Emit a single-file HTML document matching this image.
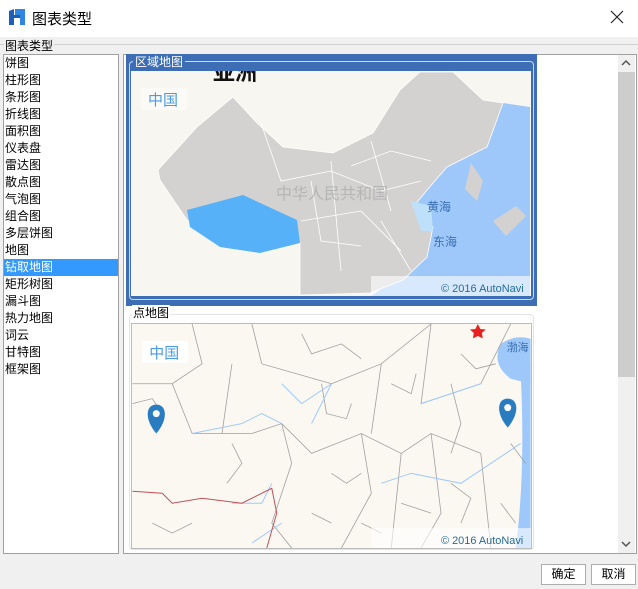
<!DOCTYPE html>
<html><head><meta charset="utf-8"><style>
*{margin:0;padding:0;box-sizing:border-box}
body{width:638px;height:589px;background:#f0f0f0;font-family:"Liberation Sans","Noto Sans CJK SC",sans-serif;position:relative;overflow:hidden;font-size:12px;color:#000}
.title{position:absolute;left:0;top:0;width:638px;height:37px;background:#fff}
.abs{position:absolute}
.list{position:absolute;left:3px;top:54px;width:116px;height:500px;background:#fff;border:1px solid #a0a0a0}
.list div{height:17px;line-height:17px;padding-left:1px;font-size:12px}
.list .sel{background:#3399ff;color:#fff}
.right{position:absolute;left:123px;top:54px;width:514px;height:500px;background:#fff;border:1px solid #a0a0a0}
.btn{position:absolute;top:564px;height:21px;background:#fff;border:1px solid #adadad;text-align:center;line-height:19px;font-size:12px}
</style></head><body>
<div class="title"></div>
<svg class="abs" style="left:8px;top:8px" width="18" height="18" viewBox="0 0 18 18"><path d="M1 3 L6 1 L6 17 L1 17Z" fill="#1d5fb8"/><path d="M7 1 L17 1 L17 17 L12 17 L12 10 L7 10Z" fill="#2e86e0"/><path d="M6 7 L12 7 L12 10 L6 10Z" fill="#1d5fb8"/></svg>
<div class="abs" style="left:32px;top:8px;font-size:15px">图表类型</div>
<svg class="abs" style="left:610px;top:10px" width="14" height="14"><path d="M1 1L13 13M13 1L1 13" stroke="#222" stroke-width="1.2"/></svg>
<div class="abs" style="left:0;top:44px;width:638px;border-top:1px solid #d0d0d0"></div>
<div class="abs" style="left:4px;top:37px;background:#f0f0f0;padding:0 1px;font-size:12px">图表类型</div>
<div class="list">
<div>饼图</div><div>柱形图</div><div>条形图</div><div>折线图</div><div>面积图</div><div>仪表盘</div><div>雷达图</div><div>散点图</div><div>气泡图</div><div>组合图</div><div>多层饼图</div><div>地图</div><div class="sel">钻取地图</div><div>矩形树图</div><div>漏斗图</div><div>热力地图</div><div>词云</div><div>甘特图</div><div>框架图</div>
</div>
<div class="right"></div>
<div class="abs" style="left:618px;top:55px;width:17px;height:498px;background:#f0f0f0"></div>
<div class="abs" style="left:618px;top:72px;width:17px;height:305px;background:#cdcdcd"></div>
<svg class="abs" style="left:620px;top:58px" width="12" height="10"><path d="M2 7L6 3L10 7" stroke="#555" fill="none" stroke-width="1.5"/></svg>
<svg class="abs" style="left:620px;top:539px" width="12" height="10"><path d="M2 3L6 7L10 3" stroke="#555" fill="none" stroke-width="1.5"/></svg>
<!-- selected panel -->
<div class="abs" style="left:126px;top:54px;width:411px;height:252px;background:#3d6db5"></div>
<div class="abs" style="left:129px;top:61px;width:405px;height:239px;border:1px solid #c8d8f0;border-radius:4px"></div>
<div class="abs" style="left:133px;top:54px;background:#3d6db5;color:#fff;padding:0 2px;font-size:12px;line-height:16px">区域地图</div>
<svg class="abs" style="left:131px;top:71px" width="400" height="225" viewBox="0 0 400 225">
<rect width="400" height="225" fill="#f8f6f1"/>
<polygon points="399,36 399,225 240,225 296,186 302,156 282,136 302,112 316,96 356,76 372,32" fill="#9fc8fa"/>
<polygon points="27,99 66,56 102,26 126,52 152,76 202,82 242,62 269,19 289,1 322,1 352,29 372,32 356,76 316,96 302,112 282,136 302,156 296,186 272,209 239,222 169,224 169,172 129,179 56,149 29,109" fill="#d4d2d1" stroke="#fff" stroke-width="0.8"/>
<polygon points="340,92 352,110 346,130 334,118" fill="#d4d2d1"/>
<polygon points="362,150 385,135 395,145 375,165" fill="#d4d2d1"/>
<polygon points="56,139 112,124 166,149 169,172 129,182 89,176 59,156" fill="#56b1f9"/>
<polygon points="280,130 300,135 302,160 290,160" fill="#bfe0fb"/>
<path d="M130,52 L150,110 L200,100 L250,120 L290,110 M170,150 L230,140 L270,180 M200,90 L210,200 M240,70 L260,140 M180,110 L190,170 L230,175 M250,150 L280,200 M220,95 L260,80 L300,90" stroke="#fff" stroke-width="0.8" fill="none"/>
<text x="82" y="9" font-size="22" font-weight="bold" fill="#111">亚洲</text>
<rect x="10" y="17" width="46" height="22" fill="#fbfaf7"/>
<text x="17" y="34" font-size="15" fill="#4a9be0">中国</text>
<text x="145" y="128" font-size="16" fill="#aaa" opacity=".7">中华人民共和国</text>
<text x="296" y="140" font-size="12" fill="#3a6fb0">黄海</text>
<text x="302" y="175" font-size="12" fill="#3a6fb0">东海</text>
<rect x="240" y="205" width="160" height="20" fill="#fff" opacity=".6"/>
<text x="310" y="221" font-size="11" fill="#246b9c">© 2016 AutoNavi</text>
</svg>
<!-- point map -->
<div class="abs" style="left:129px;top:314px;width:405px;height:236px;border:1px solid #e4e4e4;border-radius:4px"></div>
<div class="abs" style="left:132px;top:305px;background:#fff;padding:0 1px;font-size:12px;line-height:16px">点地图</div>
<svg class="abs" style="left:131px;top:323px;border:1px solid #bbb" width="401" height="226" viewBox="0 0 400 225">
<rect width="400" height="225" fill="#fbf8f2"/>
<path d="M370,20 Q385,10 400,15 L400,60 L380,55 Q360,40 370,20Z" fill="#9fc8fa"/>
<path d="M390,50 L400,40 L400,225 L385,225 Q395,150 390,50Z" fill="#9fc8fa"/>
<g stroke="#a0a0a0" stroke-width="0.8" fill="none">
<path d="M60,0 L70,40 L40,60 L60,110 L120,110 L150,100 L180,130 L230,110 L270,130 L300,110 L350,130 M0,60 L40,60 M150,100 L160,140 L140,200 L160,225 M230,110 L240,170 L210,225 M270,130 L260,225 M300,110 L310,190 L290,225 M350,130 L360,225 M120,0 L130,40 L200,60 L250,40 L300,0 M250,40 L240,110 M300,0 L290,80 L350,60 L380,0 M100,40 L90,110"/>
<path d="M0,80 L20,75 L30,90 M170,10 L180,30 L210,20 L230,35 M190,60 L195,90 L215,95 L220,80 M320,60 L330,100 L320,130 M330,30 L345,45 L365,40 M260,60 L280,70 L285,50 M200,150 L215,160 L230,150 M270,180 L300,190 M320,160 L340,175 L330,200 M380,120 L395,140 M180,190 L200,200 M100,120 L110,140 L95,160 M20,200 L40,210 L60,200 M370,180 L385,200 M230,200 L250,210"/>
</g>
<path d="M60,110 L110,100 L130,90 L150,100 M200,60 L180,100 M100,180 L130,180 L140,160 M250,160 L280,150 L330,160 L390,120 M290,80 L350,60 M120,220 L150,200 M150,60 L170,80 L200,60" stroke="#9fc8fa" stroke-width="1" fill="none"/>
<path d="M0,168 L30,170 L40,180 L70,175 L110,180 L140,165 L145,190 L135,225" stroke="#c0505a" stroke-width="1" fill="none"/>
<rect x="10" y="17" width="46" height="22" fill="#fff"/>
<text x="17" y="34" font-size="15" fill="#4a9be0">中国</text>
<text x="376" y="27" font-size="11" fill="#3a6fb0">渤海</text>
<polygon points="347,0 349.5,5 355,5.5 351,9 352,14.5 347,12 342,14.5 343,9 339,5.5 344.5,5" fill="#e82020"/>
<path d="M24,110 C12,96 13,81 24,81 C35,81 36,96 24,110Z" fill="#2a7cc0"/>
<circle cx="24" cy="90" r="3.5" fill="#fff"/>
<path d="M377,104 C365,90 366,75 377,75 C388,75 389,90 377,104Z" fill="#2a7cc0"/>
<circle cx="377" cy="84" r="3.5" fill="#fff"/>
<rect x="240" y="205" width="160" height="20" fill="#fff" opacity=".6"/>
<text x="310" y="221" font-size="11" fill="#246b9c">© 2016 AutoNavi</text>
</svg>
<div class="btn" style="left:541px;width:45px">确定</div>
<div class="btn" style="left:591px;width:45px">取消</div>
</body></html>
